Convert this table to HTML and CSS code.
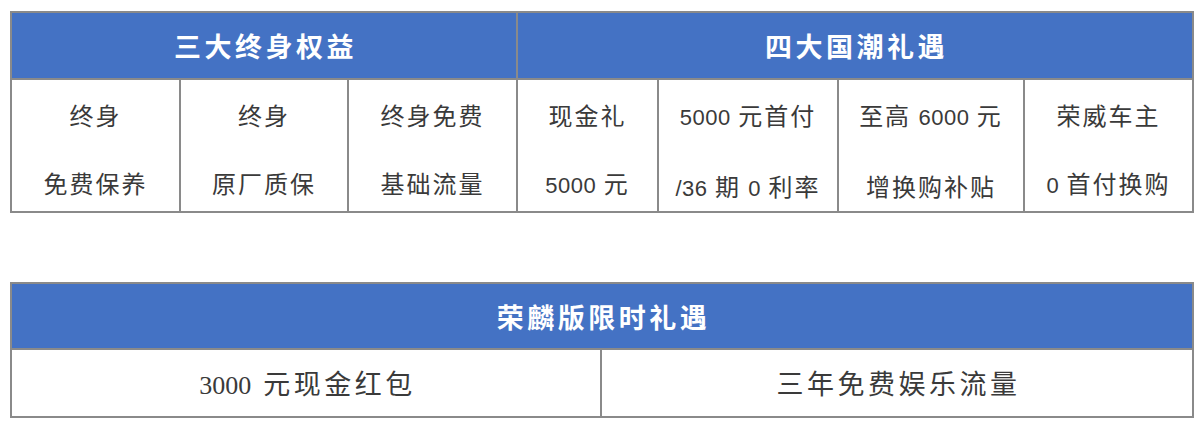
FILE: index.html
```html
<!DOCTYPE html>
<html lang="zh-CN">
<head>
<meta charset="utf-8">
<title>荣威礼遇</title>
<link rel="stylesheet" href="styles.css">
</head>
<body>
<div class="page">
  <div class="grid grid-seven">
    <div class="head span3">三大终身权益</div>
    <div class="head span4">四大国潮礼遇</div>
    <div class="cell"><div class="lines"><div>终身</div><div>免费保养</div></div></div>
    <div class="cell"><div class="lines"><div>终身</div><div>原厂质保</div></div></div>
    <div class="cell"><div class="lines"><div>终身免费</div><div>基础流量</div></div></div>
    <div class="cell"><div class="lines"><div>现金礼</div><div><span class="num">5000</span> 元</div></div></div>
    <div class="cell"><div class="lines"><div><span class="num">5000</span> 元首付</div><div><span class="num">/36</span> 期 <span class="num">0</span> 利率</div></div></div>
    <div class="cell"><div class="lines"><div>至高 <span class="num">6000</span> 元</div><div>增换购补贴</div></div></div>
    <div class="cell"><div class="lines"><div>荣威车主</div><div><span class="num">0</span> 首付换购</div></div></div>
  </div>

  <div class="grid grid-two">
    <div class="head span2">荣麟版限时礼遇</div>
    <div class="cell wide"><span class="serif">3000</span>元现金红包</div>
    <div class="cell wide">三年免费娱乐流量</div>
  </div>
</div>
</body>
</html>
```
FILE: styles.css
```css
* { box-sizing: border-box; }
html, body { margin: 0; padding: 0; background: #ffffff; }
body {
  font-family: "Noto Sans CJK SC", "Liberation Sans", sans-serif;
  color: #3a3a3a;
}
.page {
  padding: 11px 0 0 10px;
  display: flex;
  flex-direction: column;
  gap: 69px;
}
.grid {
  display: grid;
  border-top: 2px solid #8a8a8a;
  border-left: 2px solid #8a8a8a;
  width: 1184px;
}
.grid-seven {
  grid-template-columns: 169px 168px 169px 141px 180px 186px 169px;
  grid-template-rows: 67px 133px;
}
.grid-two {
  grid-template-columns: 590px 592px;
  grid-template-rows: 66px 68px;
}
.head, .cell {
  border-right: 2px solid #8a8a8a;
  border-bottom: 2px solid #8a8a8a;
}
.head {
  background: #4472c4;
  color: #ffffff;
  font-weight: 700;
  font-size: 27px;
  letter-spacing: 3.5px;
  display: flex;
  align-items: center;
  justify-content: center;
  padding-left: 3px;
}
.span3 { grid-column: span 3; }
.span4 { grid-column: span 4; }
.span2 { grid-column: span 2; }
.cell {
  font-size: 24px;
  letter-spacing: 2px;
  text-align: center;
}
.lines {
  height: 131px;
  padding-top: 1px;
  line-height: 68px;
}
.num {
  font-family: "Liberation Sans", sans-serif;
  font-size: 22px;
  letter-spacing: 0.5px;
}
.wide {
  font-size: 27px;
  letter-spacing: 3.5px;
  line-height: 66px;
  padding-left: 3px;
}
.serif {
  font-family: "Liberation Serif", serif;
  font-size: 26px;
  letter-spacing: 0;
  margin-right: 12px;
}
```
